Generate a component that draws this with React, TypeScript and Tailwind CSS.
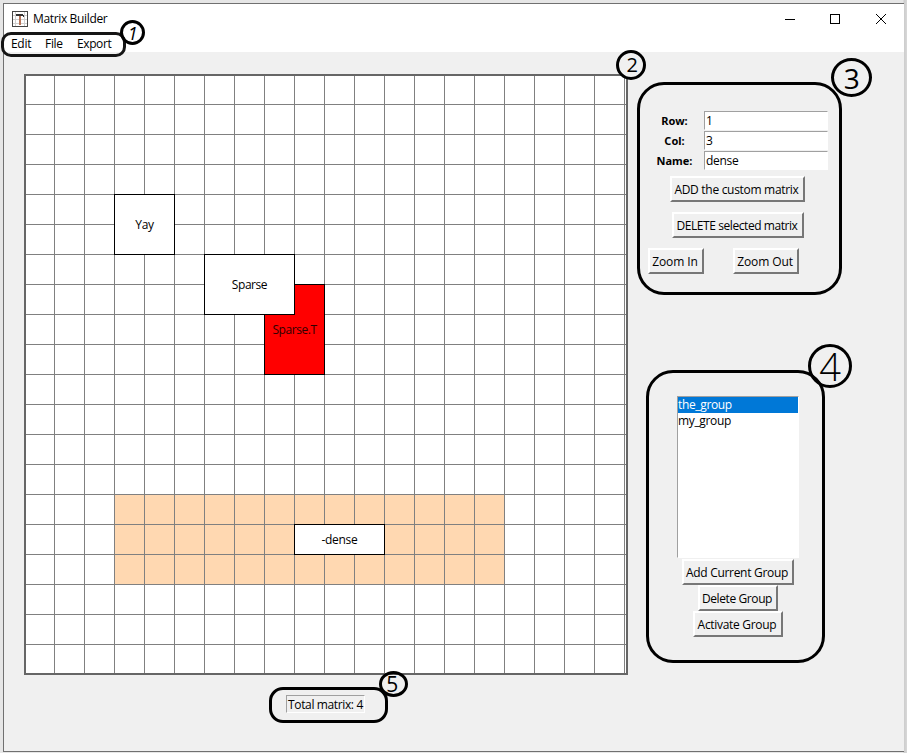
import type { ReactNode } from "react";

const raised =
  "flex items-center justify-center border-2 border-t-white border-l-white border-r-[#777777] border-b-[#777777] bg-[#f0f0f0] h-[26px] whitespace-nowrap pt-[2px] pr-[2px]";
const sunken = "border border-t-[#a0a0a0] border-l-[#a0a0a0] border-r-white border-b-white";

function Button({ className, children }: { className: string; children: ReactNode }) {
  return <button className={`${raised} ${className}`}>{children}</button>;
}

function Field({ label, value }: { label: string; value: string }) {
  return (
    <div className="flex h-5 items-center">
      <div className="flex w-[61px] justify-center pl-[2px] pt-[2px] font-['Noto_Sans'] text-[11px] font-bold tracking-normal">
        {label}
      </div>
      <div className={`flex h-[19px] w-[124px] items-center bg-white pl-px pt-px ${sunken}`}>{value}</div>
    </div>
  );
}

function Matrix({ className, children }: { className: string; children: ReactNode }) {
  return (
    <div className={`absolute flex items-center justify-center border border-black pt-px ${className}`}>{children}</div>
  );
}

function Badge({ className, children }: { className: string; children: ReactNode }) {
  return (
    <div className={`absolute flex items-center justify-center rounded-[50%] border-[3px] border-black leading-none ${className}`}>
      {children}
    </div>
  );
}

function TitleBar() {
  return (
    <div className="flex h-[30px] items-center pl-2">
      <svg width="16" height="16" viewBox="0 0 16 16" shapeRendering="crispEdges">
        <rect x="0.5" y="0.5" width="15" height="15" fill="#fff" stroke="#444" />
        <path d="M3.5 1v14M12.5 1v14M1 4.5h14M1 8.5h14M1 12.5h14" stroke="#d0d0d0" />
        <path d="M4 3h7v1h1v2h-1V5H4z" fill="#333" />
        <path d="M7 5h2v9H7z" fill="#b9755a" />
      </svg>
      <span className="ml-[5px] tracking-[-0.35px]">Matrix Builder</span>
      <svg className="ml-auto mr-[17px]" width="103" height="12" viewBox="0 0 103 12" fill="none" stroke="#000">
        <path d="M1 6.5h10" shapeRendering="crispEdges" />
        <rect x="46.5" y="1.5" width="9" height="9" shapeRendering="crispEdges" />
        <path d="M92 1l10 10M102 1L92 11" />
      </svg>
    </div>
  );
}

export default function App() {
  return (
    <div className="relative h-[753px] w-[907px] overflow-hidden bg-[linear-gradient(to_right,#e6e6e6_0_903px,#cccccc_904px,#d8d8d8_907px)] pl-[3px] pt-[3px] font-['Open_Sans',sans-serif] text-[12px] leading-4 tracking-[-0.3px] text-black">
      <div className="flex h-[749px] w-[901px] flex-col border-y border-l border-[#707070] bg-[#f0f0f0]">
        <header className="h-12 shrink-0 bg-white">
          <TitleBar />
          <nav className="flex h-[18px] items-center pl-[7px] pt-[2px]">
            <span className="w-[34px]">Edit</span>
            <span className="w-8">File</span>
            <span className="tracking-[-0.4px]">Export</span>
          </nav>
        </header>
        <main className="flex pl-5 pt-[22px]">
          <section className="w-[604px]">
            <div className="relative h-[601px] w-[604px] border-2 border-[#666666] bg-white">
              <div className="absolute left-[88px] top-[418px] h-[91px] w-[391px] bg-[#ffd8b1]" />
              <div className="absolute inset-0 bg-[linear-gradient(to_right,#808080_1px,transparent_1px),linear-gradient(to_bottom,#808080_1px,transparent_1px)] bg-[length:30px_30px] bg-[position:28px_28px]" />
              <Matrix className="left-[88px] top-[118px] h-[61px] w-[61px] bg-white">Yay</Matrix>
              <Matrix className="left-[238px] top-[208px] h-[91px] w-[61px] bg-[#ff0000] tracking-[-0.45px] text-[#300000]">Sparse.T</Matrix>
              <Matrix className="left-[178px] top-[178px] h-[61px] w-[91px] bg-white tracking-[-0.45px]">Sparse</Matrix>
              <Matrix className="left-[268px] top-[448px] h-[31px] w-[91px] bg-white">-dense</Matrix>
            </div>
            <div className={`ml-[262px] mt-5 flex h-[18px] w-[79px] items-center justify-center whitespace-nowrap pt-[2px] tracking-[-0.37px] ${sunken}`}>
              Total matrix: 4
            </div>
          </section>
          <aside className="flex flex-col pl-5 pt-9">
            <div className="-ml-[5px] mb-[6px]">
              <Field label="Row:" value="1" />
              <Field label="Col:" value="3" />
              <Field label="Name:" value="dense" />
            </div>
            <Button className="ml-[22px] w-[135px]">ADD the custom matrix</Button>
            <Button className="ml-6 mt-[10px] w-[132px] tracking-[-0.43px]">DELETE selected matrix</Button>
            <div className="mt-[10px] flex gap-[29px]">
              <Button className="w-14 tracking-[-0.1px]">Zoom In</Button>
              <Button className="w-[66px] tracking-[-0.1px]">Zoom Out</Button>
            </div>
            <div className={`ml-[29px] mt-[122px] h-[162px] w-[122px] bg-white leading-4 tracking-[-0.35px] ${sunken}`}>
              <div className="h-4 bg-[#0078d7] text-white">the_group</div>
              <div className="h-4">my_group</div>
            </div>
            <div className="ml-[29px] mt-px flex w-[122px] flex-col items-center">
              <Button className="w-28">Add Current Group</Button>
              <Button className="w-20 tracking-[-0.4px]">Delete Group</Button>
              <Button className="w-[90px]">Activate Group</Button>
            </div>
          </aside>
        </main>
      </div>

      <div className="absolute left-px top-[32px] h-[25px] w-[125px] rounded-[10px] border-[3px] border-[#151515]" />
      <div className="absolute left-[637px] top-[82px] h-[213px] w-[205px] rounded-[27px] border-[3px] border-black" />
      <div className="absolute left-[646px] top-[370px] h-[293px] w-[179px] rounded-[27px] border-[3px] border-black" />
      <div className="absolute left-[269px] top-[687px] h-9 w-[119px] rounded-[14px] border-[3px] border-black" />
      <Badge className="left-[120px] top-[20px] h-[25px] w-[25px] text-[18px] italic">1</Badge>
      <Badge className="left-[616px] top-[50px] h-[30px] w-[30px] bg-[#f0f0f0] pl-[2px] text-[20px]">2</Badge>
      <Badge className="left-[831px] top-[58px] h-[39px] w-[41px] text-[28px]">3</Badge>
      <Badge className="left-[808px] top-[344px] h-[44px] w-[44px] text-[38px] font-light">4</Badge>
      <Badge className="left-[379px] top-[671px] h-[26px] w-[29px] pr-[3px] text-[21px]">5</Badge>
    </div>
  );
}
